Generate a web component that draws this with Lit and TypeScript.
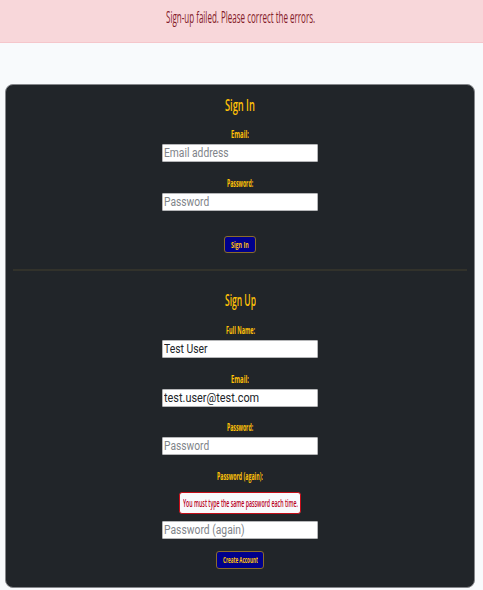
import { LitElement, html, css, nothing } from "lit";
import { customElement, property } from "lit/decorators.js";

/** A line of text condensed horizontally to a given width. */
@customElement("narrow-text")
class NarrowText extends LitElement {
  @property() text = "";
  @property({ type: Number }) width = 0;
  static styles = css`
    :host { display: block; }
    .box { display: flex; justify-content: flex-start; }
    .ink { flex: none; white-space: nowrap; transform-origin: 0 50%; }
  `;
  updated() {
    const ink = this.renderRoot.querySelector(".ink") as HTMLElement;
    ink.style.transform = `scaleX(${this.width / ink.offsetWidth})`;
  }
  render() {
    return html`<div class="box" style="width:${this.width}px"><span class="ink">${this.text}</span></div>`;
  }
}

interface Field {
  label: string;
  labelWidth: number;
  text: string;
  textWidth: number;
  filled?: boolean;
  error?: string;
}

const signIn: Field[] = [
  { label: "Email:", labelWidth: 18, text: "Email address", textWidth: 65 },
  { label: "Password:", labelWidth: 26, text: "Password", textWidth: 45 },
];
const signUp: Field[] = [
  { label: "Full Name:", labelWidth: 29, text: "Test User", textWidth: 44, filled: true },
  { label: "Email:", labelWidth: 18, text: "test.user@test.com", textWidth: 95, filled: true },
  { label: "Password:", labelWidth: 26, text: "Password", textWidth: 45 },
  {
    label: "Password (again):", labelWidth: 46, text: "Password (again)", textWidth: 81,
    error: "You must type the same password each time.",
  },
];

@customElement("app-root")
class AppRoot extends LitElement {
  static styles = css`
    * { box-sizing: border-box; }
    :host {
      display: block; height: 590px; overflow: hidden; background: #f8fafc;
      font-family: "Open Sans", "Noto Sans", sans-serif;
    }
    .alert {
      height: 43px; padding: 5px 3px 0 0; display: flex; justify-content: center;
      background: #f8d7da; border-bottom: 1px solid #f5c6cb;
      color: #842029; font-size: 15.5px; line-height: 24px;
    }
    .card {
      margin: 41px 8px 0 5px; height: 504px; padding: 0 7px;
      background: #212529; border: 1px solid #85878b; border-radius: 8px;
    }
    .form { display: flex; flex-direction: column; align-items: center; color: #ffc107; }
    .in { height: 184px; padding-top: 8px; }
    .up { padding-top: 17px; }
    .title { height: 34px; line-height: 23px; font-size: 17px; font-weight: 600; }
    .up .title { height: 35px; line-height: 24px; }
    .field { display: flex; flex-direction: column; align-items: center; height: 49px; }
    .up .field { height: 48.6px; }
    .up .last { height: 82px; }
    .label { height: 17px; line-height: 15px; font-size: 10.5px; font-weight: 700; }
    .input {
      width: 156px; height: 18px; padding-left: 1px; background: #fff;
      border: 1px solid #b5b6b8; border-radius: 1px;
      font: 12.5px/16px Roboto, sans-serif; color: #808489;
    }
    .filled { color: #212529; }
    .error {
      width: 122px; height: 22px; margin: 6px 0 7px; border: 1px solid #c40d18;
      border-radius: 3px; background: #f8fafc; color: #b8001c;
      display: flex; justify-content: center; font-size: 10.5px; font-weight: 600; line-height: 21px;
    }
    .button {
      height: 18px; padding: 0; display: flex; justify-content: center;
      background: #00008b; color: #ffc107; border: 1px solid #8b6c2a; border-radius: 3px;
      font: 700 9.5px/15px "Open Sans", sans-serif;
    }
    .login { width: 32px; height: 17px; margin-top: 11px; }
    .create { width: 48px; }
    .rule { height: 2px; background: #32322b; }
  `;

  field(f: Field) {
    return html`<div class="field ${f.error ? "last" : ""}">
      <narrow-text class="label" .text=${f.label} .width=${f.labelWidth}></narrow-text>
      ${f.error
        ? html`<div class="error"><narrow-text .text=${f.error} .width=${115}></narrow-text></div>`
        : nothing}
      <div class="input ${f.filled ? "filled" : ""}">
        <narrow-text .text=${f.text} .width=${f.textWidth}></narrow-text>
      </div>
    </div>`;
  }

  render() {
    return html`
      <div class="alert">
        <narrow-text .text=${"Sign-up failed. Please correct the errors."} .width=${149}></narrow-text>
      </div>
      <div class="card">
        <div class="form in">
          <narrow-text class="title" .text=${"Sign In"} .width=${30}></narrow-text>
          ${signIn.map((f) => this.field(f))}
          <button class="button login"><narrow-text .text=${"Sign In"} .width=${18}></narrow-text></button>
        </div>
        <div class="rule"></div>
        <div class="form up">
          <narrow-text class="title" .text=${"Sign Up"} .width=${31}></narrow-text>
          ${signUp.map((f) => this.field(f))}
          <button class="button create"><narrow-text .text=${"Create Account"} .width=${35}></narrow-text></button>
        </div>
      </div>
    `;
  }
}
